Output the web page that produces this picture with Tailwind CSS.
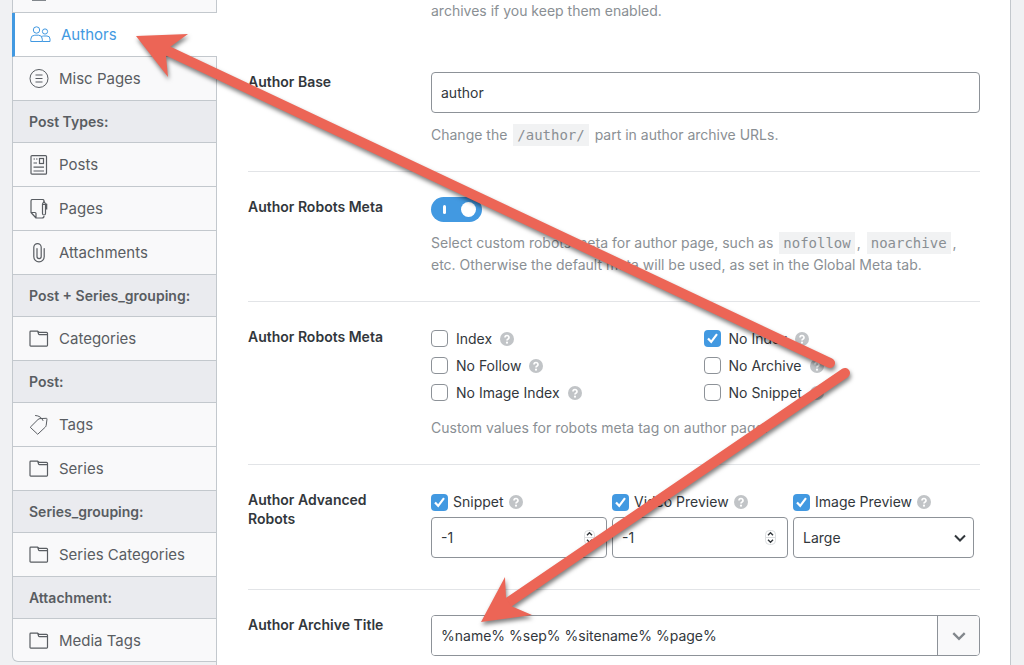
<!DOCTYPE html>
<html lang="en">
  <head>
    <meta charset="UTF-8" />
    <meta name="viewport" content="width=device-width, initial-scale=1.0" />
    <script src="https://cdn.jsdelivr.net/npm/@tailwindcss/browser@4"></script>
    <title>Titles &amp; Meta - Authors</title>
  </head>
  <body class="bg-[#f0f1f3] font-['Inter','Liberation_Sans',sans-serif] text-sm text-[#32373c]">
    <!-- Shared icons -->
    <svg class="hidden">
      <symbol id="folder" viewBox="0 0 20 20" fill="none" stroke="currentColor" stroke-width="1.200" stroke-linejoin="round">
        <path d="M1 3q0-.8.800-.8h6.900l1.300 1.100h7.500q1 0 1 1v12q0 .8-.8.8H1.800Q1 17.100 1 16.300zM8.700 2.200l.9 2.900q.2.600.9.600h8" />
      </symbol>
      <symbol id="help" viewBox="0 0 14 14">
        <circle cx="7" cy="7" r="7" fill="#c1c4c7" />
        <path d="M5 5.500a2 1.900 0 1 1 3.100 1.500Q7 7.600 7 8.400" fill="none" stroke="#fff" stroke-width="1.700" />
        <circle cx="7" cy="10.700" r="1.100" fill="#fff" />
      </symbol>
      <symbol id="check" viewBox="0 0 17 17">
        <path d="M4 8.500l3.200 3.300 5.800-7.600" fill="none" stroke="#fff" stroke-width="2.200" />
      </symbol>
      <symbol id="chevron" viewBox="0 0 14 14">
        <path d="M2 4.500l5 5 5-5" fill="none" stroke="currentColor" stroke-width="2" />
      </symbol>
      <symbol id="spinner" viewBox="0 0 11 15">
        <rect x=".5" y=".5" width="10" height="14" rx="4" fill="#fff" stroke="#dcdee0" />
        <path d="M0 7.500h11" stroke="#dcdee0" />
        <path d="M3 5.200l2.500-2.400L8 5.200M3 9.800l2.500 2.400L8 9.800" fill="none" stroke="#32373c" stroke-width="1.400" />
      </symbol>
    </svg>

    <div class="relative flex min-h-screen items-start overflow-hidden pl-3 pr-[13px]">
      <!-- Tabs -->
      <nav class="relative z-10 w-[205px] shrink-0 rounded-bl-md border border-t-0 border-[#c3c8cd] bg-[#f9f9fa] text-[15px] text-[#595d62]">
        <div class="h-[13px] border-b border-[#c3c8cd] pl-[19px]">
          <div class="h-px w-[14px] bg-[#82878c]"></div>
        </div>
        <a href="#" class="-mr-px -ml-px flex h-11 items-center gap-[10px] border-b border-l-3 border-b-[#c3c8cd] border-l-[#4299e1] bg-white pt-px pl-[15px] text-[#4299e1]">
          <svg class="h-5 w-[21px]" viewBox="0 0 21 20" fill="none" stroke="currentColor">
            <circle cx="6.500" cy="5" r="3.200" />
            <circle cx="15" cy="6.500" r="2.600" />
            <path d="M.8 16.500v-2.300q0-4 4-4h3.700q3.800 0 3.800 4v2.300zM12.300 16.500h7.700v-2.500q0-3-3-3h-3.500q-1 0-1.800.7" />
          </svg>
          Authors
        </a>
        <a href="#" class="flex h-11 items-center gap-[10px] border-b border-[#c3c8cd] pt-px pl-4">
          <svg class="size-5" viewBox="0 0 20 20" fill="none" stroke="currentColor">
            <circle cx="10" cy="9.500" r="9" />
            <path d="M6.500 6h7M6.500 9.500h7M6.500 13h7" stroke-width="1.200" />
          </svg>
          Misc Pages
        </a>
        <h2 class="flex h-[42px] items-center border-b border-[#c3c8cd] bg-[#eaebef] pt-px pl-4 text-sm font-semibold">Post Types:</h2>
        <a href="#" class="flex h-11 items-center gap-[10px] border-b border-[#c3c8cd] pt-px pl-4">
          <svg class="size-5" viewBox="0 0 20 20" fill="none" stroke="currentColor" stroke-width="1.200">
            <rect x="2" y=".6" width="15.500" height="18.600" rx="1" />
            <rect x="10.500" y="3.500" width="4" height="5" />
            <path d="M4.500 4h1.500M7 4h1.500M4.500 8h3.500M4.500 12.200h10.500M4.500 16h10.500" />
          </svg>
          Posts
        </a>
        <a href="#" class="flex h-11 items-center gap-[10px] border-b border-[#c3c8cd] pt-px pl-4">
          <svg class="size-5" viewBox="0 0 20 20" fill="none" stroke="currentColor" stroke-width="1.200" stroke-linejoin="round">
            <path d="M15 2q0-1.500-1.500-1.500H3.500Q2 .5 2 2v11.500l5 5.500h6q2 0 2-2M2 13.500h4q1 0 1 1V19" />
            <path d="M13.500 5l1.500-2.800L16.500 5v9.500q0 1.500-1.500 1.500t-1.500-1.500zM13.500 5.500h3M16.500 5h1.200v5.500" />
          </svg>
          Pages
        </a>
        <a href="#" class="flex h-11 items-center gap-[10px] border-b border-[#c3c8cd] pt-px pl-4">
          <svg class="size-5" viewBox="0 0 20 20" fill="none" stroke="currentColor" stroke-width="1.200" stroke-linecap="round">
            <path d="M15.200 5.500v8.200a5.200 5.200 0 0 1-10.400 0V4.300a3.700 3.700 0 0 1 7.400 0v9.200a2.100 2.100 0 0 1-4.200 0V5.500" />
          </svg>
          Attachments
        </a>
        <h2 class="flex h-[42px] items-center border-b border-[#c3c8cd] bg-[#eaebef] pt-px pl-4 text-sm font-semibold">Post + Series_grouping:</h2>
        <a href="#" class="flex h-11 items-center gap-[10px] border-b border-[#c3c8cd] pt-px pl-4">
          <svg class="size-5"><use href="#folder" /></svg>
          Categories
        </a>
        <h2 class="flex h-[42px] items-center border-b border-[#c3c8cd] bg-[#eaebef] pt-px pl-4 text-sm font-semibold">Post:</h2>
        <a href="#" class="flex h-11 items-center gap-[10px] border-b border-[#c3c8cd] pt-px pl-4">
          <svg class="size-5" viewBox="0 0 20 20" fill="none" stroke="currentColor" stroke-linejoin="round" stroke-linecap="round">
            <path d="M1.500 12l7.500-7.500q1-.8 2-.9l6.300-.3q.8 0 .7.800l-.8 6.200q-.1 1-.8 1.700L9 19zM6.500.5q5.500.3 7.500 5" />
          </svg>
          Tags
        </a>
        <a href="#" class="flex h-11 items-center gap-[10px] border-b border-[#c3c8cd] pt-px pl-4">
          <svg class="size-5"><use href="#folder" /></svg>
          Series
        </a>
        <h2 class="flex h-[42px] items-center border-b border-[#c3c8cd] bg-[#eaebef] pt-px pl-4 text-sm font-semibold">Series_grouping:</h2>
        <a href="#" class="flex h-11 items-center gap-[10px] border-b border-[#c3c8cd] pt-px pl-4">
          <svg class="size-5"><use href="#folder" /></svg>
          Series Categories
        </a>
        <h2 class="flex h-[42px] items-center border-b border-[#c3c8cd] bg-[#eaebef] pt-px pl-4 text-sm font-semibold">Attachment:</h2>
        <a href="#" class="flex h-[42px] items-center gap-[10px] pt-px pl-4">
          <svg class="size-5"><use href="#folder" /></svg>
          Media Tags
        </a>
      </nav>

      <!-- Settings -->
      <form class="-ml-px min-h-screen min-w-0 flex-1 border-x border-[#c3c8cd] bg-white pl-[31px] pr-[30px]">
        <div class="flex pb-[25px]">
          <div class="w-[183px] shrink-0"></div>
          <p class="leading-[22px] text-[#8a8f94]">archives if you keep them enabled.</p>
        </div>

        <div class="flex border-b border-[#e2e4e7] pt-[25px] pb-[25px]">
          <label for="base" class="w-[183px] shrink-0 leading-[19px] font-semibold">Author Base</label>
          <div class="min-w-0 flex-1">
            <input id="base" type="text" value="author" class="block h-[41px] w-full rounded-sm border border-[#8d9298] bg-white px-[9px]" />
            <p class="mt-[11px] leading-[22px] text-[#8a8f94]">
              Change the <code class="mx-[2px] bg-[#f1f2f3] px-1 py-[3px] font-['DejaVu_Sans_Mono',monospace]">/author/</code> part in author archive URLs.
            </p>
          </div>
        </div>

        <div class="flex border-b border-[#e2e4e7] pt-[25px] pb-[25px]">
          <label for="robots" class="w-[183px] shrink-0 leading-[19px] font-semibold">Author Robots Meta</label>
          <div class="min-w-0 flex-1">
            <div class="relative h-[25px] w-[51px] rounded-full bg-[#4299e1]">
              <input id="robots" type="checkbox" checked class="absolute inset-0 size-full appearance-none" />
              <span class="absolute top-2 left-3 h-[9px] w-[3px] rounded-sm bg-white"></span>
              <span class="absolute top-[5px] right-[6px] size-[15px] rounded-full bg-white"></span>
            </div>
            <p class="mt-[10px] leading-[22px] text-[#8a8f94]">
              Select custom robots meta for author page, such as
              <code class="mx-[2px] bg-[#f1f2f3] px-1 py-[3px] font-['DejaVu_Sans_Mono',monospace]">nofollow</code>,
              <code class="mx-[2px] bg-[#f1f2f3] px-1 py-[3px] font-['DejaVu_Sans_Mono',monospace]">noarchive</code>,<br />
              etc. Otherwise the default meta will be used, as set in the Global Meta tab.
            </p>
          </div>
        </div>

        <div class="flex border-b border-[#e2e4e7] pt-[25px] pb-[25px]">
          <h3 class="w-[183px] shrink-0 leading-[19px] font-semibold">Author Robots Meta</h3>
          <div class="min-w-0 flex-1">
            <div class="grid grid-cols-2 gap-y-1 pr-1">
              <div class="flex h-[23px] items-center gap-2">
                <input id="index" type="checkbox" class="size-[17px] appearance-none rounded-sm border border-[#8d9298]" />
                <label for="index">Index</label>
                <svg class="size-[14px]"><use href="#help" /></svg>
              </div>
              <div class="flex h-[23px] items-center gap-2">
                <span class="relative size-[17px]">
                  <input id="noindex" type="checkbox" checked class="block size-[17px] appearance-none rounded-sm bg-[#4299e1]" />
                  <svg class="pointer-events-none absolute inset-0 size-[17px]"><use href="#check" /></svg>
                </span>
                <label for="noindex">No Index</label>
                <svg class="size-[14px]"><use href="#help" /></svg>
              </div>
              <div class="flex h-[23px] items-center gap-2">
                <input id="nofollow" type="checkbox" class="size-[17px] appearance-none rounded-sm border border-[#8d9298]" />
                <label for="nofollow">No Follow</label>
                <svg class="size-[14px]"><use href="#help" /></svg>
              </div>
              <div class="flex h-[23px] items-center gap-2">
                <input id="noarchive" type="checkbox" class="size-[17px] appearance-none rounded-sm border border-[#8d9298]" />
                <label for="noarchive">No Archive</label>
                <svg class="size-[14px]"><use href="#help" /></svg>
              </div>
              <div class="flex h-[23px] items-center gap-2">
                <input id="noimage" type="checkbox" class="size-[17px] appearance-none rounded-sm border border-[#8d9298]" />
                <label for="noimage">No Image Index</label>
                <svg class="size-[14px]"><use href="#help" /></svg>
              </div>
              <div class="flex h-[23px] items-center gap-2">
                <input id="nosnippet" type="checkbox" class="size-[17px] appearance-none rounded-sm border border-[#8d9298]" />
                <label for="nosnippet">No Snippet</label>
                <svg class="size-[14px]"><use href="#help" /></svg>
              </div>
            </div>
            <p class="mt-[13px] leading-[22px] text-[#8a8f94]">Custom values for robots meta tag on author page.</p>
          </div>
        </div>

        <div class="flex border-b border-[#e2e4e7] pt-[25px] pb-[31px]">
          <h3 class="w-[183px] shrink-0 pr-10 leading-[19px] font-semibold">Author Advanced Robots</h3>
          <div class="flex min-w-0 flex-1 gap-[5px] pr-[6px]">
            <div class="min-w-0 flex-1">
              <div class="flex h-6 items-center gap-[5px]">
                <span class="relative size-[17px]">
                  <input id="snippet" type="checkbox" checked class="block size-[17px] appearance-none rounded-sm bg-[#4299e1]" />
                  <svg class="pointer-events-none absolute inset-0 size-[17px]"><use href="#check" /></svg>
                </span>
                <label for="snippet">Snippet</label>
                <svg class="size-[14px]"><use href="#help" /></svg>
              </div>
              <div class="relative mt-[3px]">
                <input type="text" inputmode="numeric" aria-label="Snippet length" value="-1" class="block h-[41px] w-full rounded-sm border border-[#8d9298] bg-white px-[9px]" />
                <svg class="absolute top-[13px] right-3 h-[15px] w-[11px]"><use href="#spinner" /></svg>
              </div>
            </div>
            <div class="min-w-0 flex-1">
              <div class="flex h-6 items-center gap-[5px]">
                <span class="relative size-[17px]">
                  <input id="video" type="checkbox" checked class="block size-[17px] appearance-none rounded-sm bg-[#4299e1]" />
                  <svg class="pointer-events-none absolute inset-0 size-[17px]"><use href="#check" /></svg>
                </span>
                <label for="video">Video Preview</label>
                <svg class="size-[14px]"><use href="#help" /></svg>
              </div>
              <div class="relative mt-[3px]">
                <input type="text" inputmode="numeric" aria-label="Video length" value="-1" class="block h-[41px] w-full rounded-sm border border-[#8d9298] bg-white px-[9px]" />
                <svg class="absolute top-[13px] right-3 h-[15px] w-[11px]"><use href="#spinner" /></svg>
              </div>
            </div>
            <div class="w-[181px]">
              <div class="flex h-6 items-center gap-[5px]">
                <span class="relative size-[17px]">
                  <input id="image" type="checkbox" checked class="block size-[17px] appearance-none rounded-sm bg-[#4299e1]" />
                  <svg class="pointer-events-none absolute inset-0 size-[17px]"><use href="#check" /></svg>
                </span>
                <label for="image">Image Preview</label>
                <svg class="size-[14px]"><use href="#help" /></svg>
              </div>
              <div class="relative mt-[3px]">
                <select aria-label="Image size" class="block h-[41px] w-full appearance-none rounded-sm border border-[#8d9298] bg-white px-[9px]">
                  <option>Large</option>
                  <option>Standard</option>
                  <option>None</option>
                </select>
                <svg class="pointer-events-none absolute top-[14px] right-[7px] size-[14px]"><use href="#chevron" /></svg>
              </div>
            </div>
          </div>
        </div>

        <div class="flex pt-[25px] pb-[25px]">
          <label for="title" class="w-[183px] shrink-0 leading-[19px] font-semibold">Author Archive Title</label>
          <div class="flex h-[41px] min-w-0 flex-1 overflow-hidden rounded-sm border border-[#8d9298]">
            <input id="title" type="text" value="%name% %sep% %sitename% %page%" class="min-w-0 flex-1 bg-white px-[9px]" />
            <button type="button" aria-label="Variables" class="flex w-[42px] items-center justify-center border-l border-[#8d9298] bg-[#f9f9fa] text-[#82878c]">
              <svg class="size-4"><use href="#chevron" /></svg>
            </button>
          </div>
        </div>
      </form>

      <!-- Annotation arrows -->
      <svg class="pointer-events-none absolute top-0 left-0 z-20 h-[665px] w-[1024px] text-[#ec6556] drop-shadow-[1px_3px_2px_rgba(0,0,0,0.5)]" viewBox="0 0 1024 665" fill="currentColor">
        <path d="M168 51L830 363" stroke="currentColor" stroke-width="10" stroke-linecap="round" />
        <path d="M136 36l52-2-18 13-4 9 2 21z" />
        <path d="M509 602L845 373" stroke="currentColor" stroke-width="10" stroke-linecap="round" />
        <path d="M481 622l24-45 1 21 5 8 21 9z" />
      </svg>
    </div>
  </body>
</html>
